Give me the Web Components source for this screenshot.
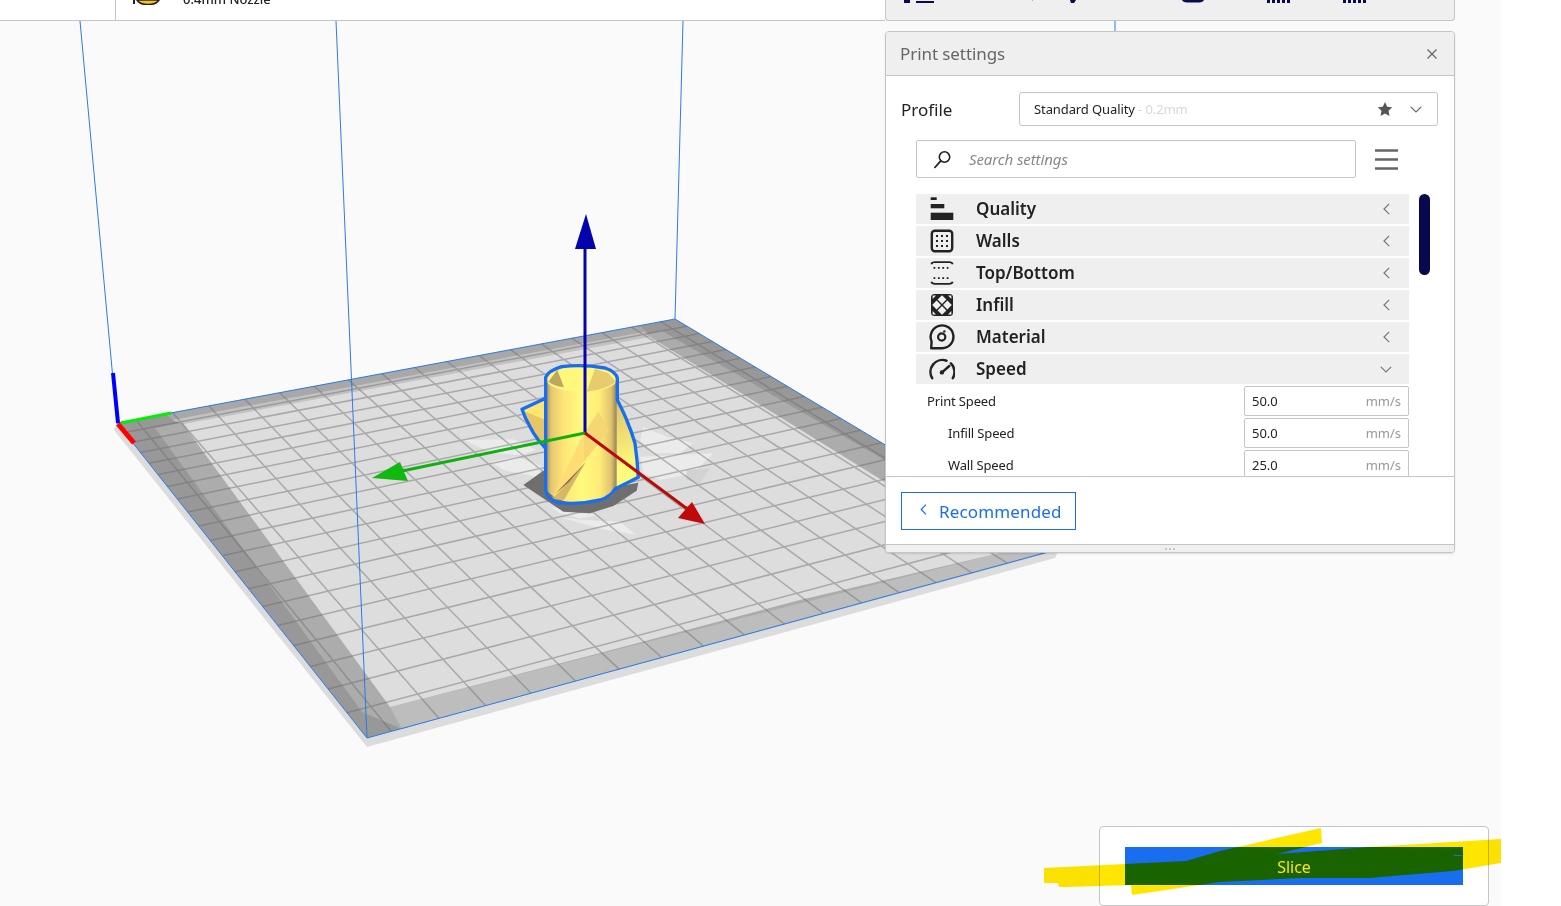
<!DOCTYPE html>
<html>
<head>
<meta charset="utf-8">
<title>Print settings</title>
<style>
  html, body { margin: 0; height: 100%; background: #fff; overflow: hidden; }
  body { font-family: "Noto Sans", sans-serif; }
  svg { display: block; }
</style>
</head>
<body>
<cura-app>
  <cura-scene slot="scene"></cura-scene>
  <cura-topbar slot="top"></cura-topbar>

  <cura-panel slot="panel" title="Print settings">
    <cura-profile name="Standard Quality" detail=" - 0.2mm"></cura-profile>
    <cura-search placeholder="Search settings"></cura-search>
    <cura-list>
      <cura-category label="Quality" dir="left">
        <svg slot="icon" viewBox="0 0 24 24" width="24" height="24" fill="#222"><rect x=".7" y=".3" width="6" height="2.7"/><rect x=".7" y="7" width="13.6" height="4.3"/><rect x=".7" y="15.7" width="22.6" height="7.3"/></svg>
      </cura-category>
      <cura-category label="Walls" dir="left">
        <svg slot="icon" viewBox="0 0 24 24" width="24" height="24"><rect x="1.8" y="1.8" width="20.4" height="20.4" rx="3" fill="none" stroke="#222" stroke-width="2.4"/><g fill="#222"><rect x="6" y="6" width="2" height="2"/><rect x="11" y="6" width="2" height="2"/><rect x="16" y="6" width="2" height="2"/><rect x="6" y="11" width="2" height="2"/><rect x="11" y="11" width="2" height="2"/><rect x="16" y="11" width="2" height="2"/><rect x="6" y="16" width="2" height="2"/><rect x="11" y="16" width="2" height="2"/><rect x="16" y="16" width="2" height="2"/></g></svg>
      </cura-category>
      <cura-category label="Top/Bottom" dir="left">
        <svg slot="icon" viewBox="0 0 24 24" width="24" height="24" fill="none" stroke="#222"><path d="M1.3 3.2Q1.8 1.2 5 1.2H19Q22.2 1.2 22.7 3.2" stroke-width="1.7"/><path d="M1.3 20.8Q1.8 22.8 5 22.8H19Q22.2 22.8 22.7 20.8" stroke-width="1.7"/><path d="M3.5 6.8H21M3.5 17.2H21" stroke-width="1.8" stroke-dasharray="1.8 2.6"/></svg>
      </cura-category>
      <cura-category label="Infill" dir="left">
        <svg slot="icon" viewBox="0 0 24 24" width="24" height="24"><rect x="1" y="1" width="22" height="22" rx="3.5" fill="#222"/><g fill="#f0f0f0"><path d="M12 2.2 16.4 6.6 12 11 7.6 6.6Z"/><path d="M12 13 16.4 17.4 12 21.8 7.6 17.4Z"/><path d="M6.6 7.6 11 12 6.6 16.4 2.2 12Z"/><path d="M17.4 7.6 21.8 12 17.4 16.4 13 12Z"/><path d="M2.6 2.6H6L2.6 6Z"/><path d="M21.4 2.6H18L21.4 6Z"/><path d="M2.6 21.4H6L2.6 18Z"/><path d="M21.4 21.4H18L21.4 18Z"/></g></svg>
      </cura-category>
      <cura-category label="Material" dir="left">
        <svg slot="icon" viewBox="0 0 26 26" width="26" height="26" fill="none" stroke="#222"><path d="M12.7 24.2H2.2L2.6 17.4A11.4 11.4 0 1 1 12.7 24.2Z" stroke-width="2.4" stroke-linejoin="round"/><circle cx="12.7" cy="13" r="3.6" stroke-width="2.2"/><circle cx="15.4" cy="7.4" r="1.2" fill="#222" stroke="none"/></svg>
      </cura-category>
      <cura-category label="Speed" dir="down">
        <svg slot="icon" viewBox="0 0 26 26" width="26" height="26" fill="none" stroke="#222" stroke-linecap="round"><path d="M3.2 22.2A12 12 0 0 1 17.5 4.7M21.9 7.4A12 12 0 0 1 23.8 22.2" stroke-width="2.5"/><path d="M12.7 16.6 20.3 10" stroke-width="2.4"/><circle cx="12.9" cy="16.4" r="2.2" fill="#222" stroke="none"/></svg>
      </cura-category>
      <cura-setting label="Print Speed" value="50.0" unit="mm/s"></cura-setting>
      <cura-setting label="Infill Speed" value="50.0" unit="mm/s" indent></cura-setting>
      <cura-setting label="Wall Speed" value="25.0" unit="mm/s" indent></cura-setting>
    </cura-list>
    <cura-back-button slot="footer">Recommended</cura-back-button>
  </cura-panel>

  <cura-slice slot="slice">Slice</cura-slice>
  <cura-scribble slot="over"></cura-scribble>
</cura-app>

<script>
// Page frame: scene sits behind, top bar and panels are laid out by flow
class CuraApp extends HTMLElement {
  constructor() {
    super();
    this.attachShadow({ mode: 'open' });
    this.shadowRoot.innerHTML = `
      <style>
        :host { display: block; position: relative; width: 1561px; height: 906px; overflow: hidden; font-family: "Noto Sans", sans-serif; }
        .stage { position: relative; width: 1501px; height: 906px; background: #fafafa; display: flex; flex-direction: column; }
        .right { flex: 1; display: flex; flex-direction: column; justify-content: space-between; align-items: flex-end; padding-top: 10px; position: relative; }
        .panel-wrap { margin-right: 46px; }
        .slice-wrap { margin-right: 12px; }
      </style>
      <div class="stage">
        <slot name="scene"></slot>
        <slot name="top"></slot>
        <div class="right">
          <div class="panel-wrap"><slot name="panel"></slot></div>
          <div class="slice-wrap"><slot name="slice"></slot></div>
        </div>
      </div>
      <slot name="over"></slot>`;
  }
}

// The 3D build plate. Plate corners are the pixel corners from the view, the grid is a homography over them
const A = [117, 423], B = [675, 319], C = [1059, 549], D = [367, 738];

function plateMap() {
  const dx1 = B[0] - C[0], dx2 = D[0] - C[0], sx = A[0] - B[0] + C[0] - D[0];
  const dy1 = B[1] - C[1], dy2 = D[1] - C[1], sy = A[1] - B[1] + C[1] - D[1];
  const det = dx1 * dy2 - dx2 * dy1;
  const g = (sx * dy2 - dx2 * sy) / det, h = (dx1 * sy - sx * dy1) / det;
  return (u, v) => {
    const w = g * u + h * v + 1;
    return [
      ((B[0] - A[0] + g * B[0]) * u + (D[0] - A[0] + h * D[0]) * v + A[0]) / w,
      ((B[1] - A[1] + g * B[1]) * u + (D[1] - A[1] + h * D[1]) * v + A[1]) / w
    ];
  };
}

class CuraScene extends HTMLElement {
  constructor() {
    super();
    this.attachShadow({ mode: 'open' });
    const map = plateMap();
    let grid = '';
    const cols = 17, rows = 20;
    for (let i = 0; i < cols; i++) {
      const p = map((i + .5) / cols, 0), q = map((i + .5) / cols, 1);
      grid += `M${p[0].toFixed(1)} ${p[1].toFixed(1)}L${q[0].toFixed(1)} ${q[1].toFixed(1)}`;
    }
    // rows bunch up towards the back a bit more than the corner estimate gives
    for (let i = 1; i < rows; i++) {
      const t = i / rows, v = .8 * t + .2 * t * t;
      const p = map(0, v), q = map(1, v);
      grid += `M${p[0].toFixed(1)} ${p[1].toFixed(1)}L${q[0].toFixed(1)} ${q[1].toFixed(1)}`;
    }
    this.shadowRoot.innerHTML = `
      <style>
        :host { display: block; position: absolute; left: 0; top: 0; width: 1501px; height: 906px; }
      </style>
      <svg width="1501" height="906" viewBox="0 0 1501 906">
        <defs>
          <linearGradient id="cyl" gradientUnits="userSpaceOnUse" x1="197" x2="410" y1="0" y2="0">
            <stop offset="0" stop-color="#a08c58"/><stop offset=".08" stop-color="#e6c871"/><stop offset=".25" stop-color="#ffe477"/>
            <stop offset=".5" stop-color="#fffa7e"/><stop offset=".75" stop-color="#ffee78"/><stop offset=".92" stop-color="#e2c46e"/><stop offset="1" stop-color="#94825a"/>
          </linearGradient>
          <linearGradient id="wing" gradientUnits="userSpaceOnUse" x1="410" x2="470" y1="200" y2="380">
            <stop offset="0" stop-color="#e3c66c"/><stop offset="1" stop-color="#fffb7c"/>
          </linearGradient>
        </defs>

        <!-- plate thickness, then the zones on top of it -->
        <path d="M117 423 L114 430 L367 747 L1055 558 L1059 549 L367 738Z" fill="#dcdcdc"/>
        <path d="M117 423 L675 319 L1059 549 L367 738Z" fill="#989898"/>
        <path d="M165 414 L640 326 L648 333 L176 422Z" fill="#a8a8a8"/>
        <path d="M155 428 L662 331 L1045 553 L437 719 L402 729 L362 712Z" fill="#acacac"/>
        <path d="M172 420 L644 332 L652 338 L183 424Z" fill="#c2c2c2"/>
        <path d="M390 707 L1000 553 L1048 553 L437 719 L402 729Z" fill="#bdbdbd"/>
        <path d="M183 424 L650 337 L1000 553 L800 600 L600 653 L390 707Z" fill="#dddddd"/>

        <!-- patchy first layer under the model -->
        <g transform="translate(480 340) scale(.3333)" fill="#ebebeb">
          <path d="M-50 300 L100 298 L170 330 L120 345 L40 340Z"/>
          <path d="M30 365 L110 350 L190 380 L170 410 L70 390Z"/>
          <path d="M490 260 L560 290 L640 310 L600 340 L520 340 L480 300Z"/>
          <path d="M480 350 L600 345 L700 340 L640 400 L540 420 L490 400Z"/>
          <path d="M230 530 L310 540 L420 545 L470 585 L380 570Z"/>
          <path d="M210 500 L300 520 L360 525 L300 535 L240 520Z"/>
          <path d="M620 390 L690 385 L660 430 L620 420Z" fill="#d2d2d2"/>
        </g>

        <path d="${grid}" fill="none" stroke="#6a6a6a" stroke-opacity=".45" stroke-width="1.5"/>

        <!-- build volume edges -->
        <g fill="none" stroke="#2a7ce8" stroke-width="1">
          <path d="M117 423 L675 319 L1059 549 L367 738Z"/>
          <path d="M117 423 L80 21M367 738 L336 21M675 319 L683 21M1115 21V31"/>
        </g>

        <!-- model, in coordinates of a 3x view anchored at 480,340 -->
        <g transform="translate(480 340) scale(.3333)">
          <path d="M130 435 L190 392 L405 440 L475 428 L470 452 L400 498 L330 520 L250 515 L205 485Z" fill="#6f6f6f"/>
          <path d="M126 208 L197 175 L197 325 L175 300 L150 260Z" fill="#ffe672"/>
          <path d="M130 212 L197 240 L197 325 L175 300 L150 260Z" fill="#e8c668"/>
          <path d="M408 180 Q430 225 440 240 Q455 275 465 310 Q472 360 475 410 L405 445Z" fill="url(#wing)"/>
          <path d="M198 118 H410 V440 Q405 465 385 472 Q340 492 300 490 Q235 490 198 450Z" fill="url(#cyl)"/>
          <ellipse cx="305" cy="118" rx="106" ry="38" fill="#fff87c"/>
          <path d="M205 125 L232 90 L252 142 Q222 138 205 125Z" fill="#bba75f"/>
          <path d="M320 155 L345 86 L385 100 L408 125 Q375 150 320 155Z" fill="#e6cc6c"/>
          <path d="M355 215 L388 270 L312 365 L312 280Z" fill="#f4d672"/>
          <path d="M312 280 L215 478 L312 365Z" fill="#ffdd74"/>
          <path d="M318 365 L218 478 L252 480Z" fill="#d6b866"/>
          <path d="M318 365 L225 462 L268 425Z" fill="#86754a"/>
          <path d="M197 450 V112 Q205 92 245 80 Q305 72 375 84 Q408 95 412 115 V180 Q430 215 440 240 Q455 275 465 310 Q472 360 475 412 L405 447 Q392 470 360 480 Q300 495 235 488 Q200 478 197 450Z M197 175 L126 208 Q135 235 150 260 Q160 280 175 300 L197 325" fill="none" stroke="#196ef0" stroke-width="10" stroke-linejoin="round"/>
        </g>

        <!-- move tool axes -->
        <path d="M585 433 V248" stroke="#0404ac" stroke-width="3"/>
        <path d="M586 214 L575 249 L596 249Z" fill="#0404ac"/>
        <path d="M585 433 L402 471" stroke="#10b010" stroke-width="3"/>
        <path d="M372 478 L400 462 L404 472 L408 481Z" fill="#10b810"/>
        <path d="M585 433 L690 511" stroke="#b80a0a" stroke-width="3"/>
        <path d="M705 524 L692 502 L678 518Z" fill="#c00a0a"/>

        <!-- origin marker -->
        <path d="M113 373 L118 423" stroke="#0000ff" stroke-width="4"/>
        <path d="M121 423 L171 413" stroke="#00f000" stroke-width="3"/>
        <path d="M118 424 L134 443" stroke="#ff0000" stroke-width="5"/>
      </svg>`;
  }
}

// Strip at the top, scrolled so only the bottom of it shows
class CuraTopbar extends HTMLElement {
  constructor() {
    super();
    this.attachShadow({ mode: 'open' });
    this.shadowRoot.innerHTML = `
      <style>
        :host { display: flex; position: relative; height: 21px; width: 1455px; overflow: hidden; }
        svg { display: block; }
        .printer { width: 885px; box-sizing: border-box; background: #fff; border-bottom: 1px solid #c5c5c5; display: flex; }
        .machine { width: 115px; border-right: 1px solid #c5c5c5; }
        .nozzle { flex: 1; display: flex; align-items: flex-end; padding: 0 0 15px 17px; gap: 22px; height: 20px; box-sizing: border-box; }
        .nozzle span { font-size: 13px; line-height: 13px; font-weight: 500; color: #222; white-space: nowrap; margin-bottom: -1px; }
        .tools { width: 570px; box-sizing: border-box; background: #efefef; border: 1px solid #c5c5c5; border-top: 0; border-radius: 0 0 4px 4px; }
      </style>
      <div class="printer">
        <div class="machine"></div>
        <div class="nozzle">
          <svg width="28" height="5" viewBox="0 0 28 5"><path d="M0 0H2V4H0Z" fill="#222"/><path d="M4 0H26Q23 4.6 15 4.6Q7 4.6 4 0Z" fill="#fcc419" stroke="#222" stroke-width="1.6"/></svg>
          <span>0.4mm Nozzle</span>
        </div>
      </div>
      <div class="tools">
        <svg width="568" height="4" viewBox="0 0 568 4" fill="#0a0a50">
          <path d="M18 0H24V3H18ZM28 0H30V3H48V1H30V0Z"/>
          <path d="M146 0H147V1H146Z" fill="#d8a0a0"/>
          <path d="M184 0H190L188 3H185Z"/>
          <path d="M296 0H318Q317 2.4 313 2.4H301Q297 2.4 296 0Z"/>
          <path d="M381 0H384V3H381ZM386 0H389V3H386ZM391 0H394V3H391ZM396 0H399V3H396ZM401 0H404V3H401Z"/>
          <path d="M457 0H460V3H457ZM462 0H465V3H462ZM467 0H470V3H467ZM472 0H475V3H472ZM477 0H480V3H477Z"/>
        </svg>
      </div>`;
  }
}

// Floating panel with a header, a scrolling body, a footer and a drag handle
class CuraPanel extends HTMLElement {
  constructor() {
    super();
    this.attachShadow({ mode: 'open' });
    this.shadowRoot.innerHTML = `
      <style>
        :host { display: block; width: 570px; height: 522px; box-sizing: border-box; background: #fff; border: 1px solid #c5c5c5; border-radius: 4px; box-shadow: 0 1px 2px rgba(0,0,0,.12); overflow: hidden; }
        .head { height: 44px; box-sizing: border-box; background: #efefef; border-bottom: 1px solid #c5c5c5; display: flex; align-items: center; justify-content: space-between; padding: 0 16px 0 14px; }
        h2 { margin: 0; font-size: 17px; font-weight: 400; color: #666; letter-spacing: -.08px; }
        .body { height: 400px; overflow: hidden; }
        .foot { height: 68px; box-sizing: border-box; border-top: 1px solid #c5c5c5; padding: 15px 0 0 15px; }
        .grip { height: 8px; box-sizing: border-box; border-top: 1px solid #c5c5c5; background: #efefef; display: flex; justify-content: center; align-items: center; gap: 2px; }
        .grip i { width: 2px; height: 2px; background: #c8c8c8; }
      </style>
      <div class="head">
        <h2></h2>
        <svg width="12" height="12" viewBox="0 0 12 12"><path d="M1.5 1.5 10.5 10.5M10.5 1.5 1.5 10.5" stroke="#666" stroke-width="1.3"/></svg>
      </div>
      <div class="body"><slot></slot></div>
      <div class="foot"><slot name="footer"></slot></div>
      <div class="grip"><i></i><i></i><i></i></div>`;
    this.shadowRoot.querySelector('h2').textContent = this.getAttribute('title');
  }
}

class CuraProfile extends HTMLElement {
  constructor() {
    super();
    this.attachShadow({ mode: 'open' });
    this.shadowRoot.innerHTML = `
      <style>
        :host { display: flex; align-items: center; justify-content: space-between; padding: 16px 16px 0 15px; }
        label { font-size: 17px; color: #222; }
        .select { width: 419px; height: 34px; box-sizing: border-box; border: 1px solid #c5c5c5; border-radius: 3px; display: flex; align-items: center; padding: 0 15px 0 14px; font-size: 13px; color: #222; }
        .name { flex: 1; white-space: pre; letter-spacing: -.1px; }
        .name em { font-style: normal; color: #d8d8d8; }
        .star { margin-right: 17px; }
      </style>
      <label>Profile</label>
      <div class="select">
        <span class="name"><span class="n"></span><em></em></span>
        <svg class="star" width="16" height="16" viewBox="0 0 16 16"><path d="M8 1 10.2 5.7 15.2 6.3 11.5 9.8 12.5 14.9 8 12.4 3.5 14.9 4.5 9.8.8 6.3 5.8 5.7Z" fill="#555"/></svg>
        <svg width="12" height="7" viewBox="0 0 12 7"><path d="M.8.8 6 6 11.2.8" fill="none" stroke="#666" stroke-width="1.2"/></svg>
      </div>`;
    this.shadowRoot.querySelector('.n').textContent = this.getAttribute('name');
    this.shadowRoot.querySelector('em').textContent = this.getAttribute('detail');
  }
}

class CuraSearch extends HTMLElement {
  constructor() {
    super();
    this.attachShadow({ mode: 'open' });
    this.shadowRoot.innerHTML = `
      <style>
        :host { display: flex; align-items: center; padding: 14px 0 0 30px; }
        .box { width: 440px; height: 38px; box-sizing: border-box; border: 1px solid #c5c5c5; border-radius: 2px; display: flex; align-items: center; padding-left: 16px; gap: 17px; }
        .ph { font-size: 15px; letter-spacing: -.1px; font-style: italic; color: #888; }
        .menu { margin-left: 19px; }
      </style>
      <div class="box">
        <svg width="19" height="19" viewBox="0 0 19 19" fill="none" stroke="#222"><circle cx="11.5" cy="7" r="5.2" stroke-width="1.6"/><path d="M7.8 10.8 1.4 18" stroke-width="1.8"/></svg>
        <span class="ph"></span>
      </div>
      <svg class="menu" width="23" height="21" viewBox="0 0 23 21"><path d="M0 1.5H23M0 10.5H23M0 19.5H23" stroke="#666" stroke-width="2.4"/></svg>`;
    this.shadowRoot.querySelector('.ph').textContent = this.getAttribute('placeholder');
  }
}

// Settings list with its scroll thumb beside it
class CuraList extends HTMLElement {
  constructor() {
    super();
    this.attachShadow({ mode: 'open' });
    this.shadowRoot.innerHTML = `
      <style>
        :host { display: flex; gap: 10px; padding: 16px 0 0 30px; }
        .rows { width: 493px; display: flex; flex-direction: column; gap: 2px; }
        .thumb { width: 11px; height: 81px; border-radius: 6px; background: #08084e; }
      </style>
      <div class="rows"><slot></slot></div>
      <div class="thumb"></div>`;
  }
}

class CuraCategory extends HTMLElement {
  constructor() {
    super();
    this.attachShadow({ mode: 'open' });
    const down = this.getAttribute('dir') === 'down';
    this.shadowRoot.innerHTML = `
      <style>
        :host { display: flex; align-items: center; height: 30px; background: #efefef; }
        .icon { width: 52px; display: flex; justify-content: center; margin-right: 8px; }
        .label { flex: 1; font-size: 17px; font-weight: 600; color: #222; padding-bottom: 2px; }
        .arrow { width: 46px; display: flex; justify-content: center; }
      </style>
      <div class="icon"><slot name="icon"></slot></div>
      <div class="label"></div>
      <div class="arrow">${down
        ? '<svg width="12" height="7" viewBox="0 0 12 7"><path d="M.8.8 6 6 11.2.8" fill="none" stroke="#777" stroke-width="1.2"/></svg>'
        : '<svg width="7" height="12" viewBox="0 0 7 12"><path d="M6.2.8 1 6 6.2 11.2" fill="none" stroke="#777" stroke-width="1.2"/></svg>'}</div>`;
    this.shadowRoot.querySelector('.label').textContent = this.getAttribute('label');
  }
}

class CuraSetting extends HTMLElement {
  constructor() {
    super();
    this.attachShadow({ mode: 'open' });
    const indent = this.hasAttribute('indent') ? 32 : 11;
    this.shadowRoot.innerHTML = `
      <style>
        :host { display: flex; align-items: center; height: 30px; padding-left: ${indent}px; font-size: 13px; color: #222; }
        .label { flex: 1; letter-spacing: -.15px; }
        .input { width: 165px; height: 30px; box-sizing: border-box; border: 1px solid #c5c5c5; border-radius: 2px; display: flex; align-items: center; justify-content: space-between; padding: 0 7px; }
        .unit { color: #999; }
      </style>
      <div class="label"></div>
      <div class="input"><span class="value"></span><span class="unit"></span></div>`;
    this.shadowRoot.querySelector('.label').textContent = this.getAttribute('label');
    this.shadowRoot.querySelector('.value').textContent = this.getAttribute('value');
    this.shadowRoot.querySelector('.unit').textContent = this.getAttribute('unit');
  }
}

class CuraBackButton extends HTMLElement {
  constructor() {
    super();
    this.attachShadow({ mode: 'open' });
    this.shadowRoot.innerHTML = `
      <style>
        :host { display: inline-flex; align-items: center; width: 175px; height: 38px; box-sizing: border-box; border: 1px solid #196ef0; padding-left: 18px; gap: 12px; font-size: 17px; color: #196ef0; }
        span { letter-spacing: .15px; }
      </style>
      <svg width="7" height="11" viewBox="0 0 7 11" style="margin-top:-3px"><path d="M6 .7 1.2 5.5 6 10.3" fill="none" stroke="#196ef0" stroke-width="1.2"/></svg>
      <span><slot></slot></span>`;
  }
}

class CuraSlice extends HTMLElement {
  constructor() {
    super();
    this.attachShadow({ mode: 'open' });
    this.shadowRoot.innerHTML = `
      <style>
        :host { display: block; width: 390px; height: 80px; box-sizing: border-box; background: #fff; border: 1px solid #c5c5c5; border-radius: 4px; padding: 20px 25px 0; }
        .btn { height: 38px; box-sizing: border-box; padding-top: 2px; background: #196ef0; color: #fff; font-size: 16px; display: flex; align-items: center; justify-content: center; }
      </style>
      <div class="btn"><slot></slot></div>`;
  }
}

// Yellow highlighter stroke across the slice button, multiplied over what is below it
class CuraScribble extends HTMLElement {
  constructor() {
    super();
    this.attachShadow({ mode: 'open' });
    this.shadowRoot.innerHTML = `
      <style>
        :host { display: block; position: absolute; left: 0; top: 0; width: 1561px; height: 906px; pointer-events: none; mix-blend-mode: multiply; }
      </style>
      <svg width="1561" height="906" viewBox="0 0 1561 906">
        <path fill-rule="evenodd" d="M1044 868 L1186 861 L1220 851 L1321 828 L1322 843 L1277 854 L1369 847 L1501 839 L1501 863 L1453 871 L1369 878 L1301 878 L1220 882 L1132 895 L1131 885 L1067 887 L1059 887 L1058 883 L1044 883Z M1454 855 H1462 V856 H1454Z" fill="#ffe600"/>
      </svg>`;
  }
}

customElements.define('cura-app', CuraApp);
customElements.define('cura-scene', CuraScene);
customElements.define('cura-topbar', CuraTopbar);
customElements.define('cura-panel', CuraPanel);
customElements.define('cura-profile', CuraProfile);
customElements.define('cura-search', CuraSearch);
customElements.define('cura-list', CuraList);
customElements.define('cura-category', CuraCategory);
customElements.define('cura-setting', CuraSetting);
customElements.define('cura-back-button', CuraBackButton);
customElements.define('cura-slice', CuraSlice);
customElements.define('cura-scribble', CuraScribble);
</script>
</body>
</html>
